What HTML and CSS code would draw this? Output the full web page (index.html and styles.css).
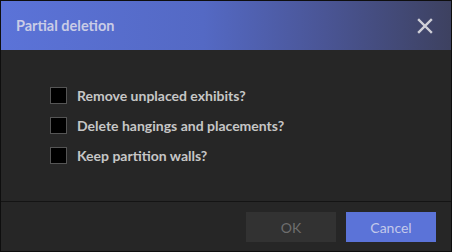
FILE: index.html
```html
<!DOCTYPE html>
<html>
<head>
<meta charset="utf-8">
<link rel="stylesheet" href="styles.css">
</head>
<body>
<div class="dialog">
  <div class="header">
    <span class="title">Partial deletion</span>
    <svg class="close" width="16" height="16" viewBox="0 0 16 16"><path d="M2 2 L14 14 M14 2 L2 14" stroke="#d0d0d8" stroke-width="2.4" stroke-linecap="square"/></svg>
  </div>
  <div class="content">
    <label class="row"><span class="box"></span><span class="label">Remove unplaced exhibits?</span></label>
    <label class="row"><span class="box"></span><span class="label">Delete hangings and placements?</span></label>
    <label class="row"><span class="box"></span><span class="label">Keep partition walls?</span></label>
  </div>
  <div class="footer">
    <button class="btn ok">OK</button>
    <button class="btn cancel">Cancel</button>
  </div>
</div>
</body>
</html>
```
FILE: styles.css
```css
html, body { margin: 0; padding: 0; }
body { width: 452px; height: 252px; background: #111; font-family: Lato, "Open Sans", sans-serif; }
.dialog {
  box-sizing: border-box;
  width: 452px; height: 252px;
  border: 1px solid #0e0e0e;
  background: #262626;
  display: flex; flex-direction: column;
}
.header {
  height: 49px;
  flex: none;
  background: linear-gradient(90deg, #5b73d8 0%, #5469c4 45%, #4a5595 72%, #3d4160 100%);
  display: flex; align-items: center; justify-content: space-between;
  padding: 0 18px 0 15px;
}
.title { color: #c9cce6; font-weight: 700; font-size: 14.5px; }
.close { display: block; margin-top: 1px; }
.content {
  flex: 1;
  padding: 37px 0 0 49px;
  display: flex; flex-direction: column; gap: 13px;
  border-bottom: 1px solid #141414;
}
.row { display: flex; align-items: center; height: 17px; }
.box {
  box-sizing: border-box;
  width: 17px; height: 17px;
  background: #000; border: 1px solid #555;
  margin-right: 10px;
}
.label { color: #c6c6c6; font-weight: 700; font-size: 14px; }
.footer {
  flex: none;
  display: flex; justify-content: flex-end; gap: 10px;
  padding: 10px 15px 9px 0;
}
.btn {
  width: 90px; height: 30px; border: none; padding: 0;
  font-family: Lato, sans-serif; font-size: 14px;
}
.ok { background: #323232; color: #6e6e6e; }
.cancel { background: #5b73d8; color: #c3c9ea; }
```
